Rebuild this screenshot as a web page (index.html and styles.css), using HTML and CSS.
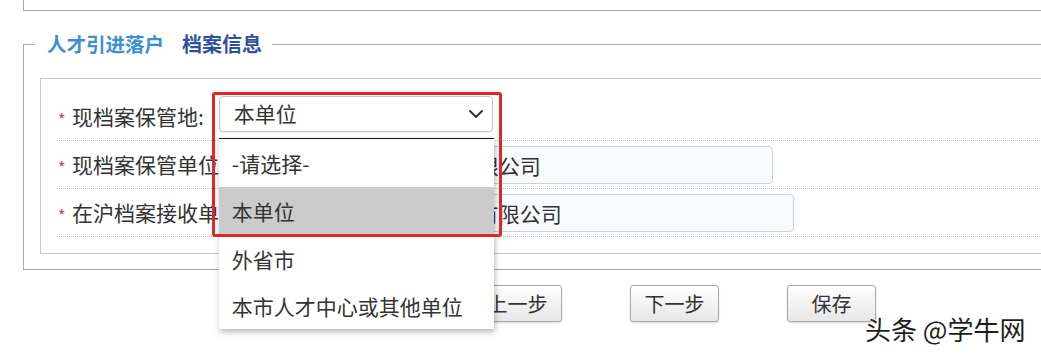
FILE: index.html
```html
<!DOCTYPE html>
<html lang="zh-CN">
<head>
<meta charset="utf-8">
<title>档案信息</title>
<link rel="stylesheet" href="styles.css">
</head>
<body>
<div class="page">
  <div class="top-box"></div>
  <fieldset class="section">
    <legend class="section-title"><span class="lg1">人才引进落户</span><span class="lg2">档案信息</span></legend>
    <div class="inner">
      <div class="row row-first">
        <span class="star">*</span>
        <span class="label">现档案保管地:</span>
        <div class="select-wrap">
          <div class="select">
            <span class="select-text">本单位</span>
            <svg class="chevron" width="14" height="8" viewBox="0 0 14 8"><path d="M1 1 L7 7 L13 1" fill="none" stroke="#333" stroke-width="2" stroke-linecap="round" stroke-linejoin="round"/></svg>
          </div>
          <ul class="dropdown">
            <li class="option">-请选择-</li>
            <li class="option selected">本单位</li>
            <li class="option">外省市</li>
            <li class="option">本市人才中心或其他单位</li>
          </ul>
          <div class="highlight"></div>
        </div>
      </div>
      <div class="row">
        <span class="star">*</span>
        <span class="label">现档案保管单位:</span>
        <div class="input">上海某某某某信息技术有限公司</div>
      </div>
      <div class="row">
        <span class="star">*</span>
        <span class="label">在沪档案接收单位:</span>
        <div class="input">上海某某某某信息技术有限公司</div>
      </div>
    </div>
  </fieldset>
  <div class="actions">
    <button class="btn">上一步</button>
    <button class="btn">下一步</button>
    <button class="btn">保存</button>
  </div>
</div>
<div class="watermark">头条 @学牛网</div>
</body>
</html>
```
FILE: styles.css
```css
html, body {
  margin: 0;
  padding: 0;
  overflow: hidden;
  background: #fff;
}
body {
  width: 1041px;
  height: 354px;
  position: relative;
  font-family: "Noto Sans CJK SC", "Noto Sans", sans-serif;
  color: #333;
}
.page {
  width: 1100px;
}
.top-box {
  margin-left: 23px;
  height: 10px;
  border-left: 1px solid #aaa;
  border-bottom: 1px solid #aaa;
}
.section {
  margin: 20px 0 0 23px;
  padding: 20px 0 15px 11px;
  border: 1px solid #aaa;
  border-right: none;
  min-width: 0;
}
.section-title {
  padding: 0 10px 0 12px;
  line-height: 26px;
  font-weight: bold;
  white-space: nowrap;
}
.lg1 {
  font-size: 19.5px;
  color: #3b8fd2;
}
.lg2 {
  font-size: 20px;
  color: #31509c;
  margin-left: 18px;
}
.inner {
  margin-left: 5px;
  border: 1px solid #c8c8c8;
  border-right: none;
  padding: 14px 0 16px 16px;
}
.row {
  height: 47px;
  display: flex;
  align-items: center;
  border-bottom: 1px dotted #bcbcbc;
}
.star {
  width: 15px;
  color: #e23a3a;
  font-size: 16px;
  line-height: 1;
  padding-left: 1px;
  box-sizing: border-box;
  padding-top: 4px;
}
.label {
  font-size: 21px;
  line-height: 1;
  margin-right: 13px;
  white-space: nowrap;
  color: #333;
}
.select-wrap {
  position: relative;
  margin-left: 2px;
}
.row-first .select-wrap {
  margin-bottom: 6px;
}
.select {
  width: 274px;
  height: 36px;
  box-sizing: border-box;
  border: 1px solid #c6c6c6;
  border-radius: 4px;
  background: #fff;
  display: flex;
  align-items: center;
  justify-content: space-between;
  padding: 0 9px 0 14px;
  box-shadow: 0 1px 1px rgba(0,0,0,0.06);
}
.select-text {
  font-size: 21px;
  line-height: 1;
}
.chevron {
  display: block;
}
.dropdown {
  position: absolute;
  left: 0;
  top: 42px;
  width: 275px;
  margin: 0;
  padding: 0;
  list-style: none;
  background: #fff;
  border-top: 1px solid #111;
  box-shadow: 1px 3px 6px rgba(0,0,0,0.28);
  z-index: 2;
}
.option {
  height: 48px;
  line-height: 48px;
  padding-left: 13px;
  font-size: 21px;
  color: #333;
  white-space: nowrap;
}
.option:last-child {
  height: 46px;
  line-height: 46px;
}
.option.selected {
  background: #cbcbcb;
}
.highlight {
  position: absolute;
  left: -7px;
  top: -4px;
  width: 290px;
  height: 145px;
  box-sizing: border-box;
  border: 3px solid #e3262a;
  border-radius: 3px;
  z-index: 3;
}
.input {
  width: 535px;
  height: 38px;
  box-sizing: border-box;
  border: 1px solid #c9d3de;
  border-radius: 4px;
  background: #fafbfc;
  font-size: 21px;
  line-height: 36px;
  padding-left: 8px;
  color: #333;
  white-space: nowrap;
}
.actions {
  display: flex;
  gap: 68px;
  margin: 15px 0 0 473px;
}
.btn {
  width: 89px;
  height: 37px;
  box-sizing: border-box;
  border: 1px solid #a9a9a9;
  border-radius: 3px;
  background: linear-gradient(#ffffff, #e7e7e7);
  box-shadow: 0 1px 2px rgba(0,0,0,0.15);
  font-family: "Noto Sans CJK SC", sans-serif;
  font-size: 20px;
  color: #333;
  padding: 0;
  line-height: 1;
}
.watermark {
  position: absolute;
  left: 865px;
  top: 314px;
  font-size: 26px;
  line-height: 30px;
  color: #1e1e1e;
  text-shadow: 0 0 2px #fff, 1px 1px 1px rgba(255,255,255,0.9);
  white-space: nowrap;
  z-index: 5;
}
```
